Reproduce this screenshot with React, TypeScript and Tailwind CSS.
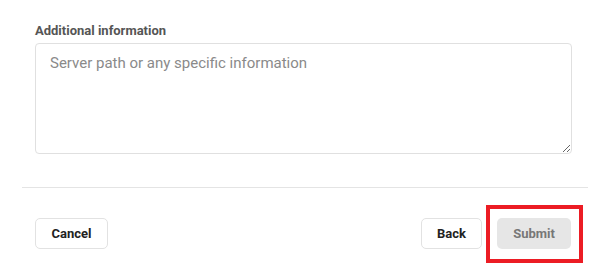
import React from 'react';

export default function App() {
  return (
    <div
      className="relative w-[610px] h-[274px] bg-white overflow-hidden"
      style={{ fontFamily: 'Roboto, "Liberation Sans", sans-serif' }}
    >
      {/* Form body */}
      <div className="px-[35px] pt-[22px]">
        <label htmlFor="info" className="block text-[13px] leading-[17px] font-bold text-[#555]">
          Additional information
        </label>
        <textarea
          id="info"
          placeholder="Server path or any specific information"
          className="mt-[4px] block w-[537px] h-[111px] rounded-[4px] border border-[#e0e0e0] px-[14px] py-[9px] text-[15px] leading-[20px] text-[#333] placeholder:text-[#8a8a8a] outline-none resize"
        />
      </div>

      <div className="mx-[22px] mt-[33px] border-t border-[#e4e4e4]" />

      {/* Footer */}
      <div className="flex items-center justify-between pl-[35px] pr-[39px] pt-[30px]">
        <button
          type="button"
          className="w-[73px] h-[31px] rounded-[5px] border border-[#e2e2e2] bg-white text-[13px] font-bold text-[#222]"
        >
          Cancel
        </button>
        <div className="flex items-center gap-[15px]">
          <button
            type="button"
            className="w-[61px] h-[31px] rounded-[5px] border border-[#e2e2e2] bg-white text-[13px] font-bold text-[#222]"
          >
            Back
          </button>
          <button
            type="submit"
            disabled
            className="w-[74px] h-[31px] rounded-[5px] bg-[#e6e6e6] text-[13px] font-bold text-[#777]"
          >
            Submit
          </button>
        </div>
      </div>

      {/* Highlight box */}
      <div className="absolute left-[486px] top-[205px] w-[97px] h-[58px] border-[4px] border-[#ec1c24]" />
    </div>
  );
}
